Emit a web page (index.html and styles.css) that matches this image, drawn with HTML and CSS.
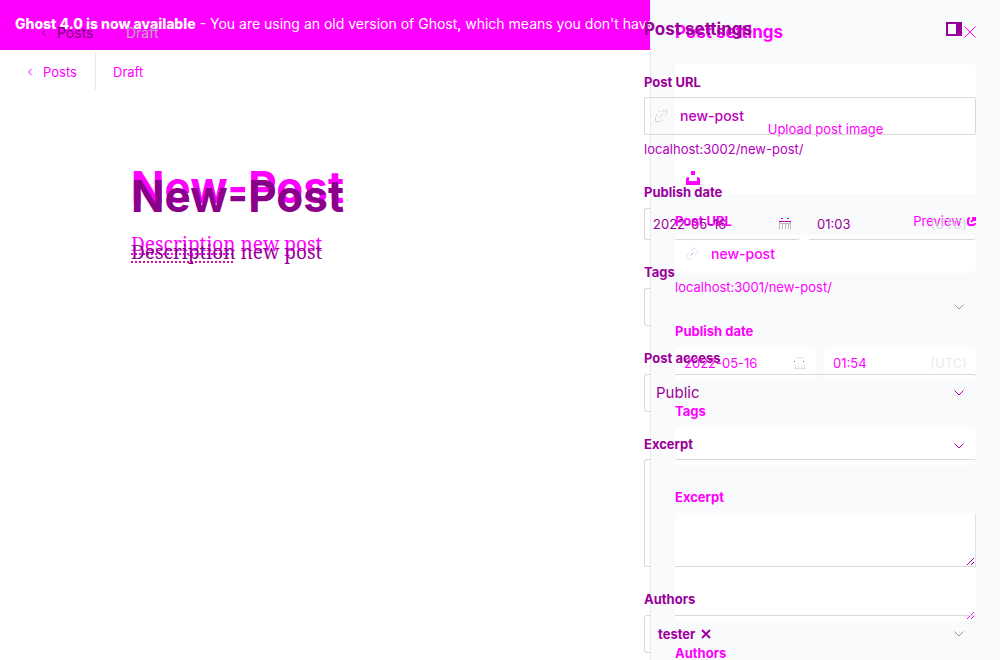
FILE: index.html
```html
<!DOCTYPE html>
<html lang="en">
<head>
<meta charset="utf-8">
<title>New-Post</title>
<link rel="stylesheet" href="styles.css">
</head>
<body>
<div class="app">
  <div class="layer base">
    <main class="editor">
      <p class="banner"><strong>Ghost 4.0 is now available</strong> - You are using an old version of Ghost, which means you don't have access to the latest features</p>
      <header class="topbar">
        <a class="back" href="#"><svg class="chev" viewBox="0 0 6 8"><path d="M4.500 1L1.500 4l3 3"/></svg>Posts</a>
        <span class="status">Draft</span>
      </header>
      <article class="post">
        <h1 class="title">New-Post</h1>
        <p class="lead"><span class="misspelt">Description</span> new post</p>
      </article>
    </main>
    <aside class="panel">
      <div class="panel-head">
        <h2>Post settings</h2>
        <button class="icon-btn" type="button" aria-label="Close"><svg width="12" height="12" viewBox="0 0 12 12"><path d="M.5.5l11 11M11.500.5l-11 11"/></svg></button>
      </div>
      <form class="fields">
        <div class="upload">
          <button class="upload-btn" type="button">Upload post image</button>
          <button class="unsplash" type="button" aria-label="Unsplash"><svg width="14" height="14" viewBox="0 0 14 14"><path d="M5 0h4v4H5zM0 8q0-2 3-2v4h8V6q3 0 3 2v6H0z"/></svg></button>
        </div>
        <div class="group url">
          <div class="label-row"><label for="a-url">Post URL</label><a class="preview" href="#">Preview <svg width="9" height="9" viewBox="0 0 9 9"><path stroke-width="2" d="M3 1Q1 1 1 3v3q0 2 2 2h3q2 0 2-2M4 5l4-4M5 1h3v3"/></svg></a></div>
          <div class="box tall"><svg class="link" viewBox="0 0 14 14"><path d="M6 4l2-2c2-2 6 2 4 4l-2 2M8 10l-2 2c-2 2-6-2-4-4l2-2"/><path d="M5 9l4-4"/><path class="mid" d="M6.500 7.500l1-1"/></svg><input id="a-url" class="slug" value="new-post"></div>
          <p class="hint">localhost:3001/new-post/</p>
        </div>
        <div class="group">
          <label for="a-date">Publish date</label>
          <div class="pair">
            <div class="box"><input id="a-date" value="2022-05-16"><svg class="cal" viewBox="0 0 12 12"><path d="M1 1h10M0 11.500h12M1.500 8v3M4.500 8v3M7.500 8v3M10.500 8v3"/><path class="mid" d="M0 4.500h1M9 4.500h1"/></svg></div>
            <div class="box"><input aria-label="Publish time" value="01:54"><small>(UTC)</small></div>
          </div>
        </div>
        <div class="group">
          <label for="a-tags">Tags</label>
          <div class="box tall"><input id="a-tags"><svg class="down" viewBox="0 0 10 6"><path d="M.5.5L5 5 9.500.5"/></svg></div>
        </div>
        <div class="group">
          <label for="a-excerpt">Excerpt</label>
          <div class="area"><textarea id="a-excerpt"></textarea><svg class="grip" viewBox="0 0 7 7"><path d="M0 7l7-7M4 7l3-3"/></svg></div>
        </div>
        <div class="group"><span class="label">Authors</span></div>
      </form>
    </aside>
  </div>

  <div class="layer over">
    <main class="editor">
      <header class="topbar">
        <a class="back" href="#"><svg class="chev" viewBox="0 0 6 8"><path d="M4.500 1L1.500 4l3 3"/></svg>Posts</a>
        <span class="status">Draft</span>
      </header>
      <article class="post">
        <h1 class="title">New-Post</h1>
        <p class="lead"><span class="misspelt">Description</span> new post</p>
      </article>
    </main>
    <aside class="panel">
      <div class="panel-head">
        <h2>Post settings</h2>
        <button class="icon-btn" type="button" aria-label="Toggle sidebar"><svg width="16" height="14" viewBox="0 0 16 14"><path d="M1 1h14v12H1z"/><path class="solid" d="M10 0h6v14h-6z"/></svg></button>
      </div>
      <form class="fields">
        <div class="group url">
          <label for="b-url">Post URL</label>
          <div class="box tall whole"><svg class="link" viewBox="0 0 14 14"><path d="M5 2.500h1M8 2.500l1-1h3.500v3.500l-2 2M3.500 5.500L1.500 8v4.500H6l2-2" stroke-dasharray="3 1"/><path d="M5 9l4-4" stroke-dasharray="2 1"/></svg><input id="b-url" class="slug" value="new-post"></div>
          <p class="hint">localhost:3002/new-post/</p>
        </div>
        <div class="group">
          <label for="b-date">Publish date</label>
          <div class="pair">
            <div class="box line-bottom"><input id="b-date" value="2022-05-16"><svg class="cal" viewBox="0 0 12 12"><path d="M.5 2.500v9M11.500 2.500v9M0 5.500h12M3.500 5v6M6.500 5v6M9.500 5v6"/><path class="mid" d="M0 3.500h12M2 .5h2M8 .5h2"/></svg></div>
            <div class="box plain line-bottom"><input aria-label="Publish time" value="01:03"><small>(UTC)</small></div>
          </div>
        </div>
        <div class="group">
          <label for="b-tags">Tags</label>
          <div class="box tall"><input id="b-tags"><svg class="down" viewBox="0 0 10 6"><path d="M.5.5L5 5 9.500.5"/></svg></div>
        </div>
        <div class="group">
          <label for="b-access">Post access</label>
          <div class="box tall line-top"><select id="b-access" class="big"><option>Public</option></select><svg class="down vivid" viewBox="0 0 10 6"><path d="M.5.5L5 5 9.500.5"/></svg></div>
        </div>
        <div class="group tight">
          <label for="b-excerpt">Excerpt</label>
          <div class="area box line-top line-bottom"><textarea id="b-excerpt"></textarea><svg class="grip" viewBox="0 0 7 7"><path d="M0 7l7-7M4 7l3-3"/></svg></div>
        </div>
        <div class="group">
          <span class="label">Authors</span>
          <div class="box tall line-top"><button class="token" type="button">tester <svg width="10" height="10" viewBox="0 0 10 10"><path d="M1 1l8 8M9 1L1 9"/></svg></button><svg class="down" viewBox="0 0 10 6"><path d="M.5.5L5 5 9.500.5"/></svg></div>
        </div>
      </form>
    </aside>
  </div>
</div>
</body>
</html>
```
FILE: styles.css
```css
* { box-sizing: border-box; }
body {
  margin: 0;
  background: #fff;
  font: 13px/16px Inter, "Liberation Sans", sans-serif;
}
h1, h2, p { margin: 0; }
a { color: inherit; text-decoration: none; }
svg { display: block; flex: none; fill: none; stroke: currentColor; }
input, textarea, select, button {
  min-width: 0;
  margin: 0;
  padding: 0;
  border: 0;
  outline: 0;
  background: none;
  color: inherit;
  font: inherit;
  appearance: none;
}
input, select { flex: 1; width: 100%; }

.app { position: relative; height: 100vh; overflow: hidden; }
.layer { display: flex; height: 100%; }
.base { color: #f0f; }
.over { position: absolute; inset: 0; color: #909; }

/* Editor */
.editor { flex: 1; min-width: 0; }
.banner {
  height: 50px;
  padding: 0 15px;
  overflow: hidden;
  background: #f0f;
  color: #fff;
  font-size: 14px;
  line-height: 48px;
  white-space: nowrap;
}
.banner strong { font-weight: 800; }
.topbar { display: flex; align-items: center; padding: 3px 0; }
.back {
  display: flex;
  align-items: center;
  gap: 10px;
  width: 96px;
  height: 37px;
  padding-left: 27px;
  border-right: 1px solid #e3ebf3;
}
.chev { width: 6px; height: 8px; }
.status { padding-left: 17px; }
.over .topbar { padding: 14px 0; font-size: 14px; }
.over .back { width: 108px; padding-left: 41px; border: 0; color: #707; }
.over .status { padding-left: 18px; color: #c9a0c9; }
.post { padding: 66px 24px 0 131px; }
.title { font-size: 44px; line-height: 56px; font-weight: 700; }
.lead {
  margin-top: 17px;
  font: 19px/24px "Noto Serif", "DejaVu Serif", serif;
}
.misspelt {
  text-decoration: underline dotted 2px;
  text-underline-offset: 2px;
  text-decoration-skip-ink: none;
}
.over .title { color: #8b008b; }
.over .misspelt { color: #808; text-decoration-color: #d3149b; }
.over .post { padding-top: 103px; }
.over .lead { margin-top: 16px; }

/* Settings panel */
.panel { flex: none; width: 350px; padding: 0 24px; }
.base .panel { background: #f9fafc; border-left: 1px solid #e3ebf3; }
.over .panel { width: 356px; padding-left: 0; }
.panel-head {
  display: flex;
  align-items: center;
  justify-content: space-between;
  height: 64px;
}
.panel-head h2 { font-size: 17px; line-height: 20px; font-weight: 700; }
.over .panel-head { height: 58px; padding-right: 14px; }
.icon-btn .solid { fill: currentColor; stroke: none; }
.over .icon-btn path:first-child { stroke-width: 2; }

.fields { display: flex; flex-direction: column; gap: 24px; }
.over .fields { padding-top: 16px; }
.group { display: flex; flex-direction: column; gap: 8px; }
.url { gap: 6px; }
.over .url { gap: 7px; }
.tight { gap: 7px; }
label, .label { font-weight: 700; }
.label-row { display: flex; justify-content: space-between; }
.preview { display: flex; align-items: center; gap: 5px; }
.hint { margin-bottom: 4px; }
.over .hint { margin-top: -1px; margin-bottom: 3px; color: #b400bc; }

.upload {
  display: flex;
  flex-direction: column;
  height: 130px;
  margin-bottom: -5px;
  padding: 0 11px 9px;
  border-radius: 3px;
  background: #fff;
}
.upload-btn { flex: 1; padding-top: 23px; }
.unsplash { align-self: flex-start; }
.unsplash path { fill: currentColor; stroke: none; }

.box {
  display: flex;
  align-items: center;
  height: 32px;
  padding: 0 9px;
  border-radius: 3px;
}
.base .box, .base .area { background: #fff; }
.tall { height: 38px; padding: 0 12px; }
.big { font-size: 15px; }
.slug { font-size: 14px; font-weight: 500; }
.over .slug { color: #b0b; }
.pair { display: grid; grid-template-columns: 141fr 152fr; gap: 8px; }
.over .pair { grid-template-columns: 156fr 168fr; }
.link { width: 14px; height: 14px; margin: 0 12px 0 -2px; color: #dfe6ec; }
.over .link { color: #ccc; }
.base .link { margin: 0 12px 0 -2px; }
.mid { stroke: #f0f; }
.cal { width: 12px; height: 12px; margin-right: 1px; color: #dfe3e6; }
.over .cal { margin-right: 0; color: #bbb; }
.over .mid { stroke: #b0b; }
small { flex: none; font-size: 13px; color: #e9ebed; }
.over small { color: #d8d8dc; }
.down { width: 10px; height: 6px; color: #999; }
.base .down, .vivid { color: #b000b0; }
.area { position: relative; height: 108px; border-radius: 3px; }
textarea { display: block; width: 100%; height: 100%; resize: none; }
.base .area {
  background: linear-gradient(#dbe3ea, #dbe3ea) right top / 1px 54px no-repeat #fff;
}
.grip { position: absolute; right: 2px; bottom: 2px; width: 7px; height: 7px; }
.token {
  display: flex;
  align-items: center;
  gap: 6px;
  margin-right: auto;
  padding-left: 2px;
  color: #a000a0;
  font-weight: 700;
}
.token path { stroke-width: 2; }

/* Field outlines that show at the left edge and across white areas */
.over .box { position: relative; }
.over .box:not(.plain)::before {
  content: "";
  position: absolute;
  inset: 0 auto 0 0;
  width: 6px;
  border: solid #d9d9d9;
  border-width: 1px 0 1px 1px;
  border-radius: 3px 0 0 3px;
}
.over .box::after {
  content: "";
  position: absolute;
  inset: 0 0 0 31px;
  border: 0 solid #d9d9d9;
  border-radius: 0 3px 3px 0;
  pointer-events: none;
}
.over .plain::after { left: 1px; }
.over .whole::after { left: 6px; border-width: 1px 1px 1px 0; }
.over .line-top::after { border-top-width: 1px; }
.over .line-bottom::after { border-bottom-width: 1px; }
```
